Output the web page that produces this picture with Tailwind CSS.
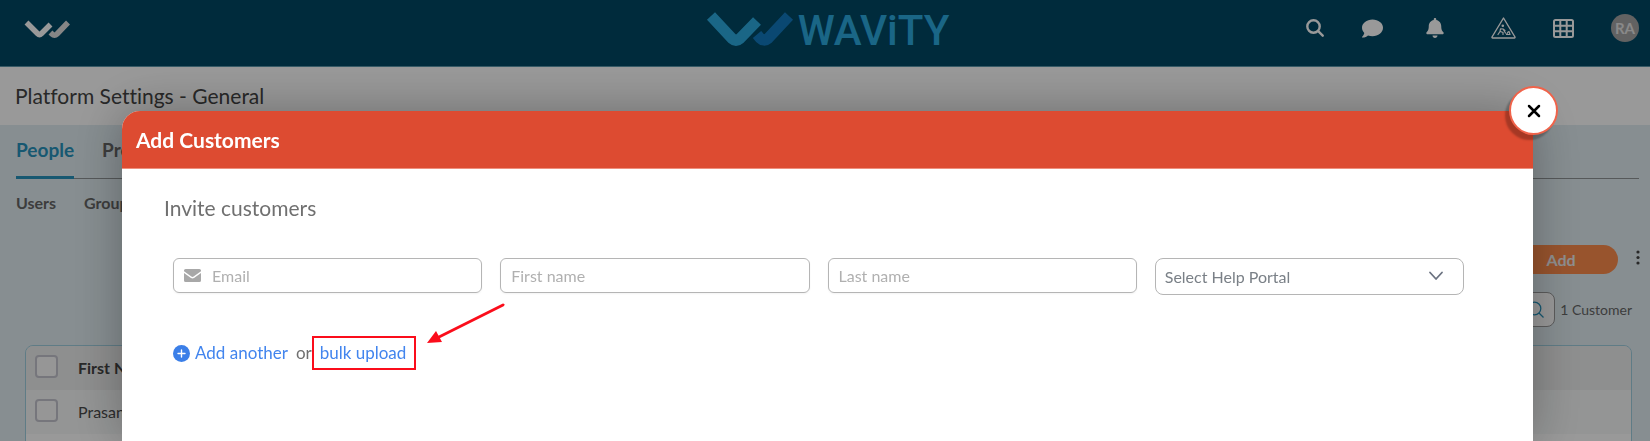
<!DOCTYPE html>
<html lang="en">
  <head>
    <meta charset="UTF-8" />
    <title>Platform Settings - General | Wavity</title>
    <meta name="viewport" content="width=device-width, initial-scale=1.0" />
    <script src="https://cdn.jsdelivr.net/npm/@tailwindcss/browser@4"></script>
  </head>
  <body class="flex flex-col h-screen overflow-hidden bg-[#e1edf2] font-['Lato',sans-serif] text-[#4a4a4a] [font-variant-ligatures:none]">

    <!-- TOP BAR -->
    <header class="shrink-0 grid grid-cols-[1fr_auto_1fr] h-[67px] bg-[#004865] border-b border-[#5c97ab] pl-6 pr-[11px]">
      <a href="#" aria-label="Home" class="pt-5">
        <svg class="w-[46px] h-[19px]" viewBox="0 0 46 19" fill="none" stroke-width="5.5" stroke-linejoin="round">
          <path d="M2.5 2.5 L13.5 13.5 Q15.5 15.5 17.5 13.5 L26.5 4.5" stroke="#fff" />
          <path d="M26.5 12.5 L28 14 Q30.5 16.5 33 14 L44 2.5" stroke="#e0e0e0" />
        </svg>
      </a>

      <div class="flex items-start pt-3 pr-2">
        <svg class="w-[88px] h-[36px]" viewBox="0 0 88 36" fill="none" stroke-width="11">
          <path d="M5 4 L26 26.5 Q30 30 34 26.5 L51 9" stroke="#2cabe0" />
          <path d="M51 22.500 L54 26 Q58 30 62 26.500 L83 4" stroke="#1279bf" />
        </svg>
        <span class="ml-1 -mt-1 text-[42px] leading-[46px] font-['Roboto',sans-serif] font-medium text-[#2cabe0]">WAViTY</span>
      </div>

      <nav class="flex items-start justify-end text-white pt-[14px]">
        <button aria-label="Search" class="mr-[38px] h-7">
          <svg class="w-[18px] h-[18px]" viewBox="0 0 18 18" fill="none" stroke="currentColor" stroke-width="2.400" stroke-linecap="round">
            <circle cx="7.500" cy="7.500" r="6.200" />
            <path d="M12.200 12.200 L16.700 16.700" />
          </svg>
        </button>
        <button aria-label="Messages" class="mr-[43px] h-7">
          <svg class="w-[21px] h-[19px]" viewBox="0 0 21 19" fill="currentColor">
            <path d="M10.500 0.500C4.700 0.500 0 4.200 0 8.800c0 2 .9 3.800 2.300 5.200C1.800 16.100 .2 17.700 .1 17.800c-.3.4-.1.800.3.800 2.600 0 4.600-1.200 5.600-2.100 1.300.5 2.900.8 4.500.8 5.800 0 10.500-3.800 10.500-8.500S16.300.5 10.500.5z" />
          </svg>
        </button>
        <button aria-label="Notifications" class="mr-[47px] h-7">
          <svg class="w-[18px] h-5" viewBox="0 0 448 512" fill="currentColor">
            <path d="M224 512c35.300 0 63.900-28.700 63.900-64H160.100c0 35.300 28.600 64 63.900 64zm215.400-149.700c-19.300-20.800-55.500-52-55.500-154.300 0-77.700-54.500-139.900-127.900-155.200V32c0-17.700-14.300-32-32-32s-32 14.300-32 32v20.800C118.600 68.100 64.100 130.300 64.100 208c0 102.300-36.200 133.500-55.500 154.300-6 6.400-8.700 14.200-8.600 21.700.1 16.400 13 32 32.100 32h383.800c19.100 0 32-15.600 32.100-32 .1-7.500-2.600-15.300-8.600-21.700z" />
          </svg>
        </button>
        <button aria-label="Under construction" class="mr-[37px] h-7">
          <svg class="w-[25px] h-[22px]" viewBox="0 0 25 22" fill="none" stroke="currentColor" stroke-width="1.400" stroke-linejoin="round" stroke-linecap="round">
            <path d="M12.500 1 L24 20 Q24.200 21 23.400 21 L1.600 21 Q.8 21 1 20 Z" />
            <circle cx="11.800" cy="8.800" r=".6" fill="currentColor" />
            <path d="M7 17.500 L9 14.500 L9.500 11.800 L12 12 L14.500 16 M9.500 14.500 L12 15.500 L12 17.500 M12 12 L14 13.500 M15.500 17.500 L17 15 L18 14.500 L19 17.500 Z" stroke-width="1.200" />
          </svg>
        </button>
        <button aria-label="Apps" class="mr-[37px] h-7">
          <svg class="w-[21px] h-[19px]" viewBox="0 0 21 19" fill="none" stroke="currentColor" stroke-width="2">
            <rect x="1" y="1" width="19" height="17" rx="1.500" />
            <path d="M7.300 1V18M13.700 1V18M1 6.700H20M1 12.300H20" />
          </svg>
        </button>
        <button class="w-7 h-7 rounded-full bg-[#a3a3a3] text-[15px] font-bold text-[#e4e4e4]">RA</button>
      </nav>
    </header>

    <!-- PAGE TITLE -->
    <div class="shrink-0 flex items-center h-[58px] bg-white px-[15px]">
      <h1 class="text-[21px] text-[#444]">Platform Settings - General</h1>
    </div>

    <!-- SETTINGS -->
    <main class="flex-1 min-h-0 overflow-hidden px-4">
      <nav class="flex gap-7 h-[54px] border-b border-[#8f9496] mr-[-5px] text-[19px] leading-7 font-bold">
        <a href="#" class="h-[54px] pt-[11px] border-b-3 border-[#2793bd] text-[#2793bd]">People</a>
        <a href="#" class="pt-[11px] text-[#666]">Profile</a>
      </nav>
      <nav class="flex gap-7 pt-3 text-base font-bold text-[#666]">
        <a href="#">Users</a>
        <a href="#">Groups</a>
      </nav>

      <div class="flex justify-end items-center gap-[18px] mt-[30px] mr-[-6px]">
        <button class="w-[114px] h-[29px] rounded-full bg-[#fd8c4c] text-base font-bold text-[#eee]">Add</button>
        <button aria-label="More" class="pb-1">
          <svg class="w-1 h-[15px]" viewBox="0 0 4 15" fill="#444"><circle cx="2" cy="2" r="1.600" /><circle cx="2" cy="7.500" r="1.600" /><circle cx="2" cy="13" r="1.600" /></svg>
        </button>
      </div>

      <div class="flex justify-end items-center mt-[18px] gap-[5px] pr-[2px]">
        <div class="flex items-center w-60 h-[35px] rounded-lg border border-[#999] bg-white pr-[10px]">
          <input type="search" aria-label="Search customers" class="flex-1 min-w-0 outline-none" />
          <svg class="w-[17px] h-[17px]" viewBox="0 0 17 17" fill="none" stroke="#2793bd" stroke-width="1.300">
            <circle cx="7.500" cy="7.500" r="6.300" />
            <path d="M12 12 L16.500 16.500" />
          </svg>
        </div>
        <span class="text-sm text-[#666]">1 Customer</span>
      </div>

      <div class="ml-[9px] mr-[2px] mt-[18px] rounded-lg border border-[#9fcfe0] overflow-hidden">
        <table class="w-full text-base text-left">
          <thead>
            <tr class="h-11 bg-[#edeeee]">
              <th class="w-[52px] pl-[9px] pb-1"><input type="checkbox" aria-label="Select all" class="block appearance-none w-[23px] h-[23px] rounded-sm border-2 border-[#c5c5cf] bg-[#fafafa]" /></th>
              <th class="font-bold text-[#444]">First Name</th>
            </tr>
          </thead>
          <tbody>
            <tr class="h-11 bg-[#f7f9f9]">
              <td class="w-[52px] pl-[9px] pb-1"><input type="checkbox" aria-label="Select Prasanna" class="block appearance-none w-[23px] h-[23px] rounded-sm border-2 border-[#c5c5cf] bg-[#fafafa]" /></td>
              <td>Prasanna</td>
            </tr>
            <tr class="h-11 bg-white"><td></td><td></td></tr>
          </tbody>
        </table>
      </div>
    </main>

    <!-- MODAL -->
    <div class="fixed inset-0 bg-black/40 pt-[111px] pl-[122px] pr-[117px]">
      <section role="dialog" aria-labelledby="modalTitle" class="relative h-full rounded-t-[18px] bg-white shadow-[0_0_50px_rgba(0,0,0,0.3)]">
        <header class="flex items-center h-[58px] rounded-t-[18px] bg-[#dd4b31] border-b border-[#ee8f7d] pl-[14px]">
          <h2 id="modalTitle" class="text-[21px] font-bold text-white">Add Customers</h2>
        </header>
        <button aria-label="Close" class="absolute -top-[25px] -right-[25px] flex items-center justify-center w-[49px] h-[49px] rounded-full border-2 border-[#f0634a] bg-white shadow-[-4px_5px_2px_rgba(0,0,0,0.25)]">
          <svg class="w-[14px] h-[14px]" viewBox="0 0 14 14" stroke="#000" stroke-width="2.500" stroke-linecap="round"><path d="M2 2 L12 12 M12 2 L2 12" /></svg>
        </button>

        <form class="pt-[27px] pl-[42px] pr-[69px]">
          <h3 class="text-[21px] leading-6 text-[#707070]">Invite customers</h3>

          <div class="grid grid-cols-4 items-start gap-[18px] mt-[38px] pl-[9px] text-base">
            <label class="flex items-center h-[35px] rounded-md border border-[#b5b5b5] shadow-xs pl-[10px]">
              <svg class="w-[17px] h-[13px]" viewBox="0 0 17 13" fill="#a8a8a8">
                <path d="M1.600 0H15.400Q17 0 17 1.600V2.300L9.600 7.600Q8.500 8.300 7.400 7.600L0 2.300V1.600Q0 0 1.600 0Z" />
                <path d="M0 4L7 9Q8.500 9.900 10 9L17 4V11.400Q17 13 15.400 13H1.600Q0 13 0 11.400Z" />
              </svg>
              <input type="email" placeholder="Email" aria-label="Email" class="flex-1 min-w-0 ml-[11px] outline-none placeholder:text-[#b0b0b0]" />
            </label>
            <input type="text" placeholder="First name" aria-label="First name" class="min-w-0 h-[35px] rounded-md border border-[#b5b5b5] shadow-xs px-[10px] placeholder:text-[#b0b0b0]" />
            <input type="text" placeholder="Last name" aria-label="Last name" class="min-w-0 h-[35px] rounded-md border border-[#b5b5b5] shadow-xs px-[10px] placeholder:text-[#b0b0b0]" />
            <div class="relative">
              <select aria-label="Help portal" class="appearance-none w-full h-[37px] rounded-lg border border-[#b5b5b5] px-[9px] text-[#7a8087]">
                <option>Select Help Portal</option>
              </select>
              <svg class="absolute right-5 top-[13px] w-4 h-[10px] pointer-events-none" viewBox="0 0 16 10" fill="none" stroke="#6b7280" stroke-width="1.800" stroke-linecap="round" stroke-linejoin="round"><path d="M2 1.500 L8 8 L14 1.500" /></svg>
            </div>
          </div>

          <div class="relative flex items-center mt-[44px] pl-[9px] text-[17px] leading-7 text-[#707070]">
            <button type="button" class="flex items-center gap-[5px] text-[#4285ee]">
              <svg class="w-[17px] h-[17px]" viewBox="0 0 17 17"><circle cx="8.500" cy="8.500" r="8.500" fill="#3b7fe8" /><path d="M8.500 5V12M5 8.500H12" stroke="#fff" stroke-width="1.400" stroke-linecap="round" /></svg>
              Add another
            </button>
            <span class="ml-2">or</span>
            <a href="#" class="relative ml-2 text-[#4285ee]">bulk upload
              <span class="absolute -left-2 -right-[10px] -inset-y-[3px] border-2 border-[#fb0d1b]"></span>
            </a>
            <svg class="absolute left-[263px] -top-[37px] w-[78px] h-[42px]" viewBox="0 0 78 42" fill="#fb0d1b">
              <path d="M76 3 L12 35" stroke="#fb0d1b" stroke-width="2.800" stroke-linecap="round" />
              <path d="M0 41 L9 29 L15 40 Z" />
            </svg>
          </div>
        </form>
      </section>
    </div>
  </body>
</html>
